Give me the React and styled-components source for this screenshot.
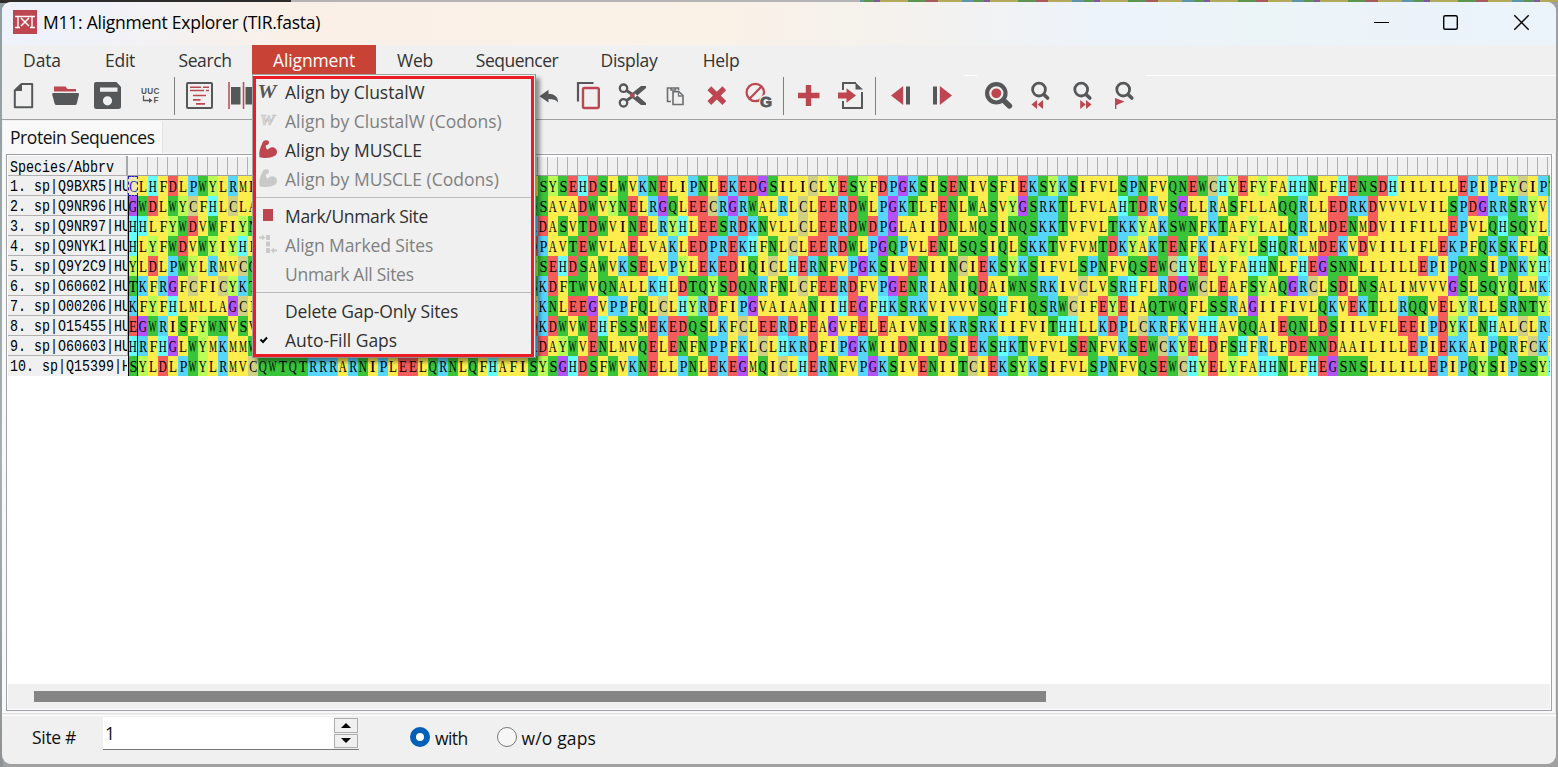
import React from "react";
import styled, { createGlobalStyle } from "styled-components";

const INK = "#555759";
const RED = "#be4650";
const UI = `"Open Sans", "Noto Sans", sans-serif`;

const Global = createGlobalStyle`
  html, body { margin: 0; padding: 0; overflow: hidden; }
  * { box-sizing: border-box; }
`;

const Desktop = styled.div`
  width: 1558px;
  height: 767px;
  padding: 2px 2px 3px 2px;
  background:
    linear-gradient(90deg, #2e2b2b 0 291px, #b5b3b5 291px 860px, transparent 860px) 0 0 / 100% 3px no-repeat,
    repeating-linear-gradient(90deg, #b3a95a 0 28px, #5d9450 28px 46px, #a85a5e 46px 58px, #b3a95a 58px 82px, #5f95ab 82px 94px, #5d9450 94px 104px, #8058a0 104px 110px) 0 0 / 100% 2px no-repeat,
    linear-gradient(180deg, #8f9c9e 0, #a5b2b4 60%, #8f9294 100%) 0 0 / 3px 100% no-repeat,
    #a0a0a0;
  font-family: ${UI};
`;

const Window = styled.div`
  width: 1554px;
  height: 762px;
  border-radius: 9px;
  background: #f0f0f0;
  display: flex;
  flex-direction: column;
  overflow: hidden;
`;

const TitleBar = styled.header`
  height: 43px;
  flex: none;
  display: flex;
  align-items: flex-start;
  padding-left: 11px;
  background: linear-gradient(90deg, #edf2fb 0, #f1f2f8 100px, #faf0e7 290px, #faf1e7 720px, #f3f2ef 930px, #edf3fb 1100px, #ebf4f7 1260px, #ebf3fb 1500px);
`;

const Logo = styled.svg`
  display: block;
  flex: none;
  margin-top: 8px;
`;

const Title = styled.h1`
  margin: 8px 0 0 6px;
  flex: 1;
  font-size: 17.5px;
  font-weight: 400;
  line-height: 24px;
  letter-spacing: -0.25px;
  color: #000;
  white-space: nowrap;
`;

const WindowButtons = styled.div`
  display: flex;
  height: 41px;
  svg { display: block; }
`;

const MenuBar = styled.nav`
  height: 29px;
  flex: none;
  display: flex;
  position: relative;
  z-index: 5;
`;

const MenuLabel = styled.div`
  width: ${(p) => p.$w}px;
  height: 29px;
  line-height: 31px;
  text-align: center;
  white-space: nowrap;
  font-size: 17.5px;
  letter-spacing: ${(p) => p.$ls ?? -0.3}px;
  color: ${(p) => (p.$active ? "#fff" : "#333")};
  background: ${(p) => (p.$active ? "#c84235" : "transparent")};
  position: relative;
`;

const Popup = styled.div`
  position: absolute;
  left: 0;
  top: 29px;
  width: 284px;
  height: 284px;
  padding: 1px 1px 1px 0;
  border: 1px solid #a3a3a3;
  border-right-color: #8d8d8d;
  border-bottom-color: #8d8d8d;
  background: #f0f0f0;
  box-shadow: 4px 4px 4px rgba(0, 0, 0, 0.4);
  text-align: left;
`;

const PopupFrame = styled.div`
  height: 281px;
  width: 281px;
  border: 3px solid #ed1c24;
  display: flex;
  flex-direction: column;
  overflow: hidden;
`;

const Item = styled.div`
  height: 29px;
  flex: none;
  display: flex;
  align-items: flex-start;
  font-size: 17.5px;
  line-height: 27px;
  letter-spacing: ${(p) => p.$ls}px;
  color: ${(p) => (p.$off ? "#808080" : "#303030")};
`;

const ItemIcon = styled.div`
  width: 29px;
  height: 29px;
  flex: none;
  svg { display: block; }
`;

const ItemRule = styled.div`
  height: 8px;
  flex: none;
  padding-top: 2px;
  &::after { content: ""; display: block; height: 1px; background: #bcbcbc; }
`;

const ToolBar = styled.div`
  height: 46px;
  flex: none;
  display: flex;
  border-bottom: 1px solid #a0a0a0;
  svg { display: block; flex: none; }
`;

const ToolBarTail = styled.div`
  flex: 1;
  height: 2px;
  border-bottom: 1px solid #fff;
`;

const Tabs = styled.div`
  height: 33px;
  flex: none;
  padding: 1px 0 0 1px;
`;

const Tab = styled.div`
  width: 160px;
  height: 32px;
  padding-left: 7px;
  line-height: 33px;
  font-size: 17.5px;
  letter-spacing: -0.43px;
  white-space: nowrap;
  color: #111;
  background: #f9f9f9;
  border-right: 1px solid #e2e2e2;
`;

const Sheet = styled.section`
  height: 561px;
  flex: none;
  padding: 1px 2px 2px 4px;
  background: #f9f9f9;
  border-right: 1px solid #e4e4e4;
  border-bottom: 1px solid #e2e2e2;
`;

const Grid = styled.div`
  width: 1546px;
  height: 557px;
  border: 1px solid #a0a0a6;
  padding: 1px;
  background: #fff;
  display: flex;
  flex-direction: column;
`;

const Line = styled.div`
  display: flex;
  flex: none;
  height: 20px;
  overflow: hidden;
`;

const Species = styled.div`
  width: 120px;
  height: 100%;
  flex: none;
  background: #f0f0f0;
  border-right: ${(p) => (p.$head ? 2 : 1)}px solid ${(p) => (p.$last ? "#f0f0f0" : "#a8a8a8")};
  border-bottom: 1px solid ${(p) => (p.$last ? "#f0f0f0" : "#b0b0b0")};
  overflow: hidden;
  padding-left: 2px;
  font-family: "Liberation Mono", monospace;
  font-size: 13.333px;
  line-height: ${(p) => (p.$head ? 24 : 22)}px;
  color: #000;
  white-space: pre;
`;

const Tall = styled.span`
  display: inline-block;
  transform: scaleY(1.2);
`;

const Ruler = styled.div`
  flex: 1;
  border-top: 1px solid #fff;
  border-bottom: 1px solid #a0a0a0;
  background: repeating-linear-gradient(90deg, #f0f0f0 0 9px, #b0b0b0 9px 10px);
`;

const Residue = styled.div`
  width: 10px;
  height: 20px;
  flex: none;
  display: flex;
  justify-content: center;
  background: ${(p) => (p.$cursor ? "#efe7b4" : p.$bg)};
  color: ${(p) => (p.$cursor ? "#2020d0" : "#000")};
  ${(p) => p.$picked && !p.$cursor && "box-shadow: inset 1px 0 #000, inset -1px 0 #000;"}
  ${(p) => p.$cursor && "outline: 1px dashed #1c1cc0; outline-offset: -1px;"}
  font: 16px/22px "Liberation Serif", serif;
`;

const Glyph = styled.span`
  flex: none;
  transform: scaleX(${(p) => p.$sx});
`;

const Blank = styled.div`
  flex: 1;
`;

const ScrollTrack = styled.div`
  height: 25px;
  flex: none;
  background: #f0f0f0;
  padding: 7px 0 0 26px;
`;

const ScrollThumb = styled.div`
  width: 1012px;
  height: 11px;
  background: #858585;
`;

const StatusBar = styled.footer`
  flex: 1;
  margin-top: 1px;
  border-top: 1px solid #fff;
  display: flex;
  align-items: flex-start;
  color: #111;
  font-size: 17.5px;
  line-height: 24px;
  white-space: nowrap;
`;

const SiteLabel = styled.label`
  width: 71px;
  margin: 9px 0 0 30px;
  letter-spacing: -0.3px;
`;

const SiteBox = styled.div`
  width: 256px;
  height: 33px;
  margin-top: 1px;
  display: flex;
  background: #fff;
  border-bottom: 1px solid #777;
`;

const SiteValue = styled.div`
  flex: 1;
  padding: 4px 0 0 2px;
`;

const Spinner = styled.div`
  width: 25px;
  padding: 1px 1px 1px 0;
  display: flex;
  flex-direction: column;
  gap: 1px;
  background: #f0f0f0;
`;

const Spin = styled.div`
  flex: 1;
  display: flex;
  align-items: center;
  justify-content: center;
  border: 1px solid #adadad;
  svg { display: block; }
`;

const Choice = styled.label`
  display: flex;
  align-items: center;
  gap: 5px;
  margin: 10px 0 0 ${(p) => p.$gap}px;
  letter-spacing: ${(p) => p.$ls}px;
`;

const Radio = styled.span`
  width: 20px;
  height: 20px;
  margin-top: -3px;
  border-radius: 50%;
  border: ${(p) => (p.$on ? "6px solid #005fb8" : "1px solid #777")};
  background: ${(p) => (p.$on ? "#fff" : "#f6f6f6")};
`;

const CLASSES = {
  "#ffed4d": "AFILMV",
  "#3ac43a": "NQSTW",
  "#55d5ff": "KRP",
  "#f55d5d": "DE",
  "#64ffff": "H",
  "#b9ff55": "Y",
  "#b452fa": "G",
  "#d0d084": "C",
};
const COLOR = {};
Object.entries(CLASSES).forEach(([c, set]) => [...set].forEach((r) => (COLOR[r] = c)));

// Advance widths in em, used to bring every letter to one common cell width.
const EM = { A: 0.722, C: 0.667, D: 0.722, E: 0.611, F: 0.556, G: 0.722, H: 0.722, I: 0.333, K: 0.722, L: 0.611, M: 0.889, N: 0.722, P: 0.556, Q: 0.722, R: 0.667, S: 0.556, T: 0.611, V: 0.722, W: 0.944, Y: 0.722 };
const squeeze = (r) => Math.min(1.1, 8 / (EM[r] * 16));

const SEQUENCES = [
  ["1. sp|Q9BXR5|HU", "CLHFDLPWYLRMLGQCTQTWHRVRKTTQEQLKRNVRFHAFISYSEHDSLWVKNELIPNLEKEDGSILICLYESYFDPGKSISENIVSFIEKSYKSIFVLSPNFVQNEWCHYEFYFAHHNLFHENSDHIILILLEPIPFYCIPT"],
  ["2. sp|Q9NR96|HU", "GWDLWYCFHLCLAWLPWRGRQSGRDEDALPYDAFVVFDKTQSAVADWVYNELRGQLEECRGRWALRLCLEERDWLPGKTLFENLWASVYGSRKTLFVLAHTDRVSGLLRASFLLAQQRLLEDRKDVVVLVILSPDGRRSRYVR"],
  ["3. sp|Q9NR97|HU", "HHLFYWDVWFIYNVCLAKVKGYRSLSTSQTFYDAYISYDTKDASVTDWVINELRYHLEESRDKNVLLCLEERDWDPGLAIIDNLMQSINQSKKTVFVLTKKYAKSWNFKTAFYLALQRLMDENMDVIIFILLEPVLQHSQYLR"],
  ["4. sp|Q9NYK1|HU", "HLYFWDVWYIYHFCKAKIKGYQRLISPDCCYDAFIVYDTKDPAVTEWVLAELVAKLEDPREKHFNLCLEERDWLPGQPVLENLSQSIQLSKKTVFVMTDKYAKTENFKIAFYLSHQRLMDEKVDVIILIFLEKPFQKSKFLQL"],
  ["5. sp|Q9Y2C9|HU", "YLDLPWYLRMVCQWTQTRRRARNIPLEELQRNLQFHAFISYSEHDSAWVKSELVPYLEKEDIQICLHERNFVPGKSIVENIINCIEKSYKSIFVLSPNFVQSEWCHYELYFAHHNLFHEGSNNLILILLEPIPQNSIPNKYHK"],
  ["6. sp|O60602|HU", "TKFRGFCFICYKTAQRLVFKDHPQGTEPDMYKYDAYLCFSSKDFTWVQNALLKHLDTQYSDQNRFNLCFEERDFVPGENRIANIQDAIWNSRKIVCLVSRHFLRDGWCLEAFSYAQGRCLSDLNSALIMVVVGSLSQYQLMKH"],
  ["7. sp|O00206|HU", "KFYFHLMLLAGCIKYGRGENIYDAFVIYSSQDEDWVRNELVKNLEEGVPPFQLCLHYRDFIPGVAIAANIIHEGFHKSRKVIVVVSQHFIQSRWCIFEYEIAQTWQFLSSRAGIIFIVLQKVEKTLLRQQVELYRLLSRNTYL"],
  ["8. sp|O15455|HU", "EGWRISFYWNVSVHRVLGFKEIDRQTEQFEYAAYIIHAYKDKDWVWEHFSSMEKEDQSLKFCLEERDFEAGVFELEAIVNSIKRSRKIIFVITHHLLKDPLCKRFKVHHAVQQAIEQNLDSIILVFLEEIPDYKLNHALCLRR"],
  ["9. sp|O60603|HU", "HRFHGLWYMKMMWAWLQAKRKPRKAPSRNICYDAFVSYSERDAYWVENLMVQELENFNPPFKLCLHKRDFIPGKWIIDNIIDSIEKSHKTVFVLSENFVKSEWCKYELDFSHFRLFDENNDAAILILLEPIEKKAIPQRFCKL"],
  ["10. sp|Q15399|H", "SYLDLPWYLRMVCQWTQTRRRARNIPLEELQRNLQFHAFISYSGHDSFWVKNELLPNLEKEGMQICLHERNFVPGKSIVENIITCIEKSYKSIFVLSPNFVQSEWCHYELYFAHHNLFHEGSNSLILILLEPIPQYSIPSSYH"],
];

// A toolbar picture; the view box keeps toolbar coordinates, x to x + w.
const Tool = ({ x, w, children }) => (
  <svg width={w} height="44" viewBox={`${x} 74 ${w} 44`} fill="none">
    {children}
  </svg>
);

const Divider = ({ x, w }) => (
  <Tool x={x} w={w}>
    <path d={`M${x + w / 2} 77V115`} stroke="#808080" strokeWidth="1" />
  </Tool>
);

const Lens = ({ cx }) => (
  <g stroke={INK}>
    <circle cx={cx} cy="89.6" r="6.4" strokeWidth="2.8" />
    <path d={`M${cx + 5} 94.6L${cx + 8.6} 98`} strokeWidth="3.6" strokeLinecap="round" />
  </g>
);

const Tools = () => (
  <ToolBar>
    <Tool x={2} w={42}>
      <path d="M21.5 84H32.2V107.2H14.8V90.5Z" stroke={INK} strokeWidth="2" strokeLinejoin="round" />
      <path d="M14 91L22 83V91Z" fill={INK} />
    </Tool>
    <Tool x={44} w={42}>
      <path d="M54 86.5H65.5L67.5 89H76V91.5H54Z" fill={RED} />
      <path d="M53 93H78Q79.4 93 79 94.5L76.8 103.5Q76.5 105 75 105H56.5Q55 105 54.6 103.5L52.2 94.5Q52 93 53 93Z" fill={INK} />
    </Tool>
    <Tool x={86} w={42}>
      <path fillRule="evenodd" d="M96 82H116.5L121 87V106.5Q121 109 118.5 109H96.5Q94 109 94 106.5V84Q94 82 96 82ZM100 87.4V91.8H117.5V87.4ZM107.5 96.2A4.6 4.6 0 1 0 107.5 105.4A4.6 4.6 0 1 0 107.5 96.2Z" fill={INK} />
    </Tool>
    <Tool x={128} w={42}>
      <text x="141" y="94.2" fontSize="8.2" fontWeight="700" letterSpacing="0.3" fontFamily="Liberation Sans, sans-serif" fill={INK}>UUC</text>
      <text x="153.6" y="103" fontSize="8.2" fontWeight="700" fontFamily="Liberation Sans, sans-serif" fill={INK}>F</text>
      <path d="M143.5 95.5V100.5H150" stroke={INK} strokeWidth="1.3" />
      <path d="M149 98L152.5 100.5L149 103Z" fill={INK} />
    </Tool>
    <Divider x={170} w={9} />
    <Tool x={179} w={44}>
      <rect x="187" y="83" width="25" height="25" rx="1" stroke={INK} strokeWidth="2" />
      <path d="M190 87.3H201M203 87.3H209M190 90.5H204M206 90.5H209M193 95.5H206M193 99.9H200.5M196 103.9H205" stroke={RED} strokeWidth="1.6" />
    </Tool>
    <Tool x={223} w={312}>
      <path d="M229 82V109M243.5 82V109" stroke={RED} strokeWidth="1.5" />
      <rect x="231" y="87" width="9.5" height="17.5" fill={INK} />
      <rect x="245.5" y="87" width="9.5" height="17.5" fill={INK} />
    </Tool>
    <Tool x={535} w={34}>
      <path d="M539.5 96.3L548.5 89.8V93.7C554 93.7 558 96.5 558.2 102.4C556 99.6 553 99 548.5 99V102.6Z" fill={INK} />
    </Tool>
    <Tool x={569} w={42}>
      <path d="M578 101.5V83H593.5" stroke={INK} strokeWidth="2.2" />
      <rect x="583" y="88" width="15.8" height="20" rx="1.5" stroke={RED} strokeWidth="2.4" />
    </Tool>
    <Tool x={611} w={44}>
      <g stroke={INK} strokeWidth="2.3">
        <circle cx="623.5" cy="88.2" r="3.7" />
        <circle cx="623.5" cy="102.8" r="3.7" />
        <path d="M626.5 90.5L634 95.5M626.5 100.5L634 95.5" strokeWidth="3" />
      </g>
      <path d="M631 94L641 86H646V88L635 97.5ZM631 97L641 105H646V103L635 93.5Z" fill={INK} />
      <circle cx="632.3" cy="95.5" r="2.2" fill={RED} />
    </Tool>
    <Tool x={655} w={42}>
      <path d="M671 101.5H667.5V88H678.5V90.5M671 88V90H675.5V88" stroke="#6c6e70" strokeWidth="1.6" />
      <path d="M673 91.7H679L683 95.5V104.5H673Z" stroke="#6c6e70" strokeWidth="1.6" />
      <path d="M678.5 91.5V96H683" stroke="#77797b" strokeWidth="1.3" />
    </Tool>
    <Tool x={697} w={40}>
      <path d="M709.3 88.3L724.3 103M724.3 88.3L709.3 103" stroke={RED} strokeWidth="5.4" />
    </Tool>
    <Tool x={737} w={42}>
      <circle cx="755.3" cy="92.5" r="8.7" stroke={RED} strokeWidth="2.2" />
      <path d="M749.3 99L761.5 86.5" stroke={RED} strokeWidth="2.2" />
      <circle cx="766" cy="101.7" r="7" fill="#f0f0f0" />
      <text x="760" y="107.3" fontSize="15.5" fontWeight="700" fontFamily="Liberation Sans, sans-serif" fill={INK} stroke={INK} strokeWidth="0.8">G</text>
    </Tool>
    <Divider x={779} w={9} />
    <Tool x={788} w={42}>
      <path d="M808.5 85V106M798 95.5H819.5" stroke={RED} strokeWidth="5.4" />
    </Tool>
    <Tool x={830} w={41}>
      <path d="M843 90V83H856M862 92V108H843V101" stroke={INK} strokeWidth="2" />
      <path d="M855.5 82.5V89.5H863Z" fill={INK} />
      <path d="M838 92.5H846.5V88.2L856 95.5L846.5 102.8V98.5H838Z" fill={RED} />
    </Tool>
    <Divider x={871} w={9} />
    <Tool x={880} w={42}>
      <path d="M891 95.5L903.2 86V105Z" fill={RED} />
      <rect x="906" y="86.5" width="4" height="18" fill={INK} />
    </Tool>
    <Tool x={922} w={42}>
      <rect x="933" y="86.5" width="4" height="18" fill={INK} />
      <path d="M952 95.5L939.8 86V105Z" fill={RED} />
    </Tool>
    <Tool x={964} w={56}>
      <path d="M964 75.5H977" stroke="#fff" />
      <circle cx="996.3" cy="93.3" r="9.2" stroke={INK} strokeWidth="4.2" />
      <circle cx="996.3" cy="93.3" r="4.9" fill={RED} />
      <path d="M1003.5 100.3L1009.5 106" stroke={INK} strokeWidth="5.4" strokeLinecap="round" />
    </Tool>
    <Tool x={1020} w={42}>
      <Lens cx={1039} />
      <path d="M1031.5 104.5L1037 100V109ZM1037.5 104.5L1043 100V109Z" fill={RED} />
    </Tool>
    <Tool x={1062} w={42}>
      <Lens cx={1081.2} />
      <path d="M1091.5 104.5L1086 100V109ZM1085.7 104.5L1080.2 100V109Z" fill={RED} />
    </Tool>
    <Tool x={1104} w={42}>
      <Lens cx={1123.2} />
      <path d="M1115 98L1124.5 101.5L1116.3 105.3V109H1115Z" fill={RED} />
    </Tool>
    <ToolBarTail />
  </ToolBar>
);

const ARM = "M4 17.5C3.2 13 4.5 8 6.5 4.5C7 2.2 8.5 0.8 10.5 0.8C12.8 0.6 13.7 1.9 13.5 3.3C13.3 5 12.3 5.7 10.5 5.7C10 7.5 10.5 9 12.2 10.2C14 7.3 17.8 6.8 20 9C22.5 11.5 21.7 15 19 16.6C15 18.9 8 19.2 4 17.5Z";

const Pic = ({ y = 0, children }) => (
  <svg width="29" height="29" viewBox={`0 ${y} 29 29`} fill="none">
    {children}
  </svg>
);

const PICTURES = {
  w: (
    <Pic y={1}>
      <text x="1.5" y="19.5" fontSize="19" fontWeight="700" fontStyle="italic" fontFamily="Liberation Serif, serif" fill={INK} textLength="19" lengthAdjust="spacingAndGlyphs">W</text>
    </Pic>
  ),
  wOff: (
    <Pic y={1}>
      <text x="4" y="17.5" fontSize="15" fontWeight="700" fontStyle="italic" fontFamily="Liberation Serif, serif" fill="#dedede" stroke="#c2c2c2" strokeWidth="0.7" textLength="15" lengthAdjust="spacingAndGlyphs">W</text>
    </Pic>
  ),
  arm: (
    <Pic y={-3}>
      <path d={ARM} fill={RED} transform="translate(-0.5 -0.5)" />
    </Pic>
  ),
  armOff: (
    <Pic y={-3}>
      <path d={ARM} fill="#c9c9c9" transform="translate(-0.5 -0.5)" />
    </Pic>
  ),
  mark: (
    <Pic>
      <rect x="7" y="6" width="10" height="12" fill={RED} />
    </Pic>
  ),
  marked: (
    <Pic>
      <path d="M10 3H14V8H10ZM10 9.5H14V14.5H10ZM10 16H14V21H10ZM3 4.5H6V2.5L9.3 5.5L6 8.5V6.5H3ZM21 17.5H18V15.5L14.7 18.5L18 21.5V19.5H21Z" fill="#c9c9c9" />
    </Pic>
  ),
  check: (
    <Pic>
      <path d="M4.5 12.5L7 15L11 10.5" stroke="#000" strokeWidth="2" />
    </Pic>
  ),
};

const ITEMS = [
  ["Align by ClustalW", "w", false, 0],
  ["Align by ClustalW (Codons)", "wOff", true, 0.01],
  ["Align by MUSCLE", "arm", false, 0.02],
  ["Align by MUSCLE (Codons)", "armOff", true, 0.02],
  null,
  ["Mark/Unmark Site", "mark", false, -0.36],
  ["Align Marked Sites", "marked", true, -0.1],
  ["Unmark All Sites", null, true, -0.28],
  null,
  ["Delete Gap-Only Sites", null, false, -0.17],
  ["Auto-Fill Gaps", "check", false, -0.03],
];

const AlignmentMenu = () => (
  <Popup>
    <PopupFrame>
      {ITEMS.map((it, i) =>
        it ? (
          <Item key={i} $off={it[2]} $ls={it[3]}>
            <ItemIcon>{it[1] && PICTURES[it[1]]}</ItemIcon>
            {it[0]}
          </Item>
        ) : (
          <ItemRule key={i} />
        )
      )}
    </PopupFrame>
  </Popup>
);

const MENUS = [["Data", 80, -0.15], ["Edit", 76], ["Search", 94, -0.4], ["Alignment", 124, -0.12], ["Web", 78], ["Sequencer", 126, -0.48], ["Display", 98], ["Help", 86]];

export default function App() {
  return (
    <Desktop>
      <Global />
      <Window>
        <TitleBar>
          <Logo width="24" height="24" viewBox="0 0 24 24" fill="none">
            <rect width="24" height="24" fill={RED} />
            <path d="M2 6.5H5V17.5M2 17.5H7M22 6.5H19V17.5M22 17.5H17" stroke="#fff" strokeWidth="1.4" />
            <path d="M5 6.500H19M8 8L16 16M16 8L8 16" stroke="#fff" strokeWidth="1.5" />
          </Logo>
          <Title>M11: Alignment Explorer (TIR.fasta)</Title>
          <WindowButtons>
            <svg width="204" height="41" viewBox="1352 2 204 41" fill="none" stroke="#000">
              <path d="M1374 22.5H1389" strokeWidth="1.2" />
              <rect x="1443.7" y="15.7" width="13.6" height="13.6" rx="1.5" strokeWidth="1.4" />
              <path d="M1514.3 15.3L1528.7 29.7M1528.7 15.3L1514.3 29.7" strokeWidth="1.4" />
            </svg>
          </WindowButtons>
        </TitleBar>
        <MenuBar>
          {MENUS.map(([label, w, ls]) => (
            <MenuLabel key={label} $w={w} $ls={ls} $active={label === "Alignment"}>
              {label}
              {label === "Alignment" && <AlignmentMenu />}
            </MenuLabel>
          ))}
        </MenuBar>
        <Tools />
        <Tabs>
          <Tab>Protein Sequences</Tab>
        </Tabs>
        <Sheet>
          <Grid>
            <Line>
              <Species $head><Tall>Species/Abbrv</Tall></Species>
              <Ruler />
            </Line>
            {SEQUENCES.map(([name, seq], row) => (
              <Line key={name}>
                <Species $last={row === 9}><Tall>{name}</Tall></Species>
                {[...seq].map((r, i) => (
                  <Residue key={i} $bg={COLOR[r]} $picked={i === 0} $cursor={i === 0 && row === 0}>
                    <Glyph $sx={squeeze(r)}>{r}</Glyph>
                  </Residue>
                ))}
              </Line>
            ))}
            <Blank />
            <ScrollTrack>
              <ScrollThumb />
            </ScrollTrack>
          </Grid>
        </Sheet>
        <StatusBar>
          <SiteLabel>Site #</SiteLabel>
          <SiteBox>
            <SiteValue>1</SiteValue>
            <Spinner>
              <Spin><svg width="10" height="5"><path d="M0 5L5 0L10 5Z" /></svg></Spin>
              <Spin><svg width="10" height="5"><path d="M0 0L5 5L10 0Z" /></svg></Spin>
            </Spinner>
          </SiteBox>
          <Choice $gap={51} $ls={-0.6}><Radio $on />with</Choice>
          <Choice $gap={29} $ls={0.15}><Radio />w/o gaps</Choice>
        </StatusBar>
      </Window>
    </Desktop>
  );
}
